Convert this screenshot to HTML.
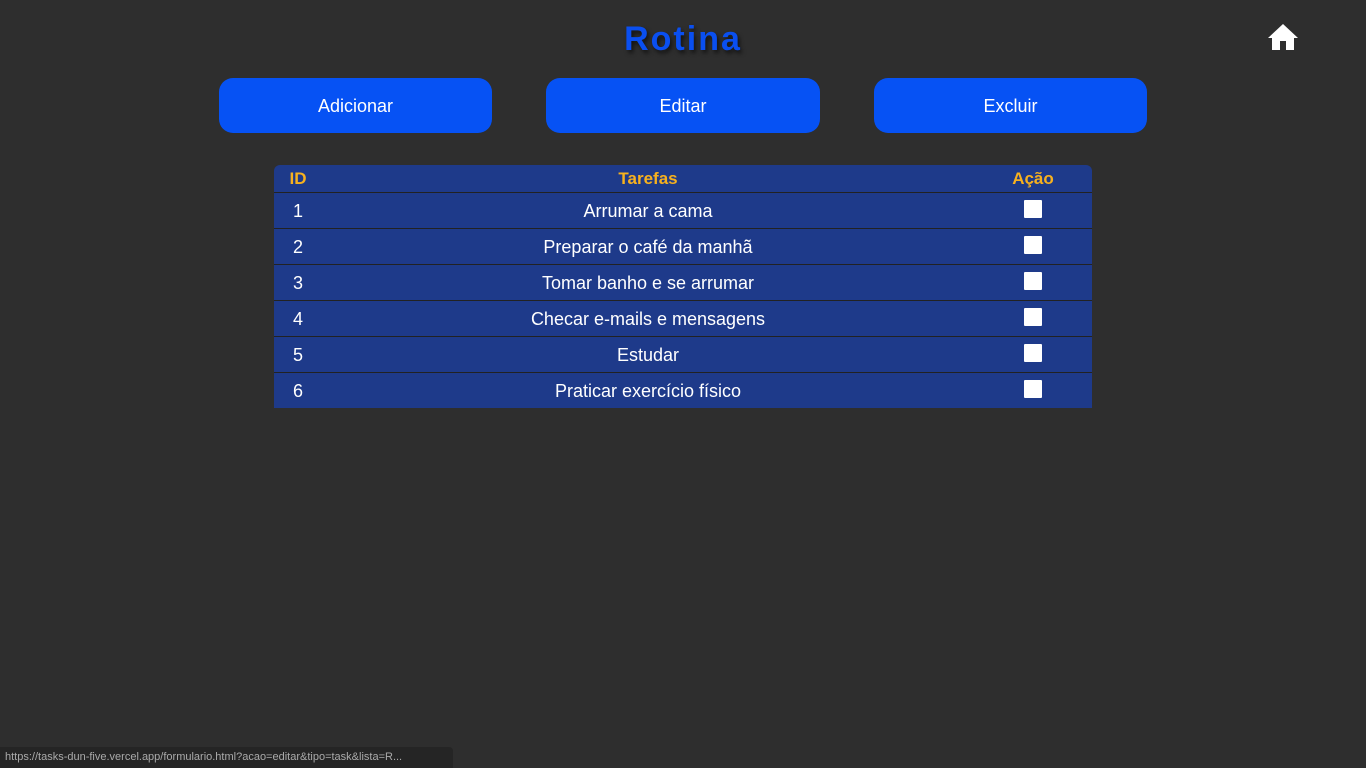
<!DOCTYPE html>
<html><head><style>
body{margin:0;width:1366px;height:768px;background:#2e2e2e;font-family:"Liberation Sans",sans-serif;position:relative;overflow:hidden}
h1{position:absolute;top:20px;left:0;width:1366px;text-align:center;margin:0;font-size:34px;font-weight:900;color:#0a4ff0;letter-spacing:2px;text-shadow:2px 3px 4px rgba(0,0,0,.6)}
.btn{position:absolute;top:78px;height:55px;background:#0652f4;border-radius:14px;color:#fff;font-size:18px;display:flex;align-items:center;justify-content:center;padding-top:2px;box-sizing:border-box}
table{position:absolute;left:274px;top:165px;width:818px;border-collapse:collapse;background:#1e3a8a;border-radius:6px 6px 0 0}
th{color:#f7b11e;font-size:17px;height:27px;font-weight:bold;padding:0}
td{color:#fff;font-size:18px;height:34px;border-top:1px solid #222;text-align:center;padding:1px 0 0 0}
.cb{display:inline-block;width:18px;height:18px;background:#fff;border-radius:1px;vertical-align:middle;position:relative;top:-3px}
.status{position:absolute;left:0;bottom:0;height:21px;width:453px;background:#252525;color:#aaa;font-size:11px;line-height:21px;padding-left:5px;box-sizing:border-box;border-radius:0 4px 0 0}
</style></head><body>
<h1>Rotina</h1>
<svg style="position:absolute;left:1267px;top:23px" width="32" height="28" viewBox="0 0 32 28"><path d="M16 1 L1 15 L5 15 L5 27 L13 27 L13 18 L19 18 L19 27 L27 27 L27 15 L31 15 Z" fill="#fff"/></svg>
<div class="btn" style="left:219px;width:273px">Adicionar</div>
<div class="btn" style="left:546px;width:274px">Editar</div>
<div class="btn" style="left:874px;width:273px">Excluir</div>
<table>
<tr><th style="width:48px">ID</th><th>Tarefas</th><th style="width:118px">Ação</th></tr>
<tr><td>1</td><td>Arrumar a cama</td><td><span class="cb"></span></td></tr>
<tr><td>2</td><td>Preparar o café da manhã</td><td><span class="cb"></span></td></tr>
<tr><td>3</td><td>Tomar banho e se arrumar</td><td><span class="cb"></span></td></tr>
<tr><td>4</td><td>Checar e-mails e mensagens</td><td><span class="cb"></span></td></tr>
<tr><td>5</td><td>Estudar</td><td><span class="cb"></span></td></tr>
<tr><td>6</td><td>Praticar exercício físico</td><td><span class="cb"></span></td></tr>
</table>
<div class="status">https://tasks-dun-five.vercel.app/formulario.html?acao=editar&amp;tipo=task&amp;lista=R...</div>
</body></html>
